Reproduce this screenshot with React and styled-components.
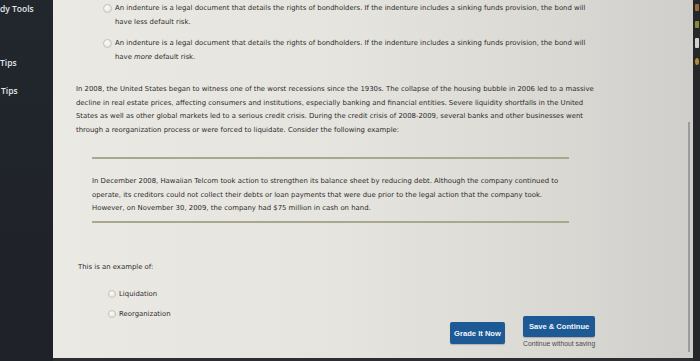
import React from 'react';
import styled, { createGlobalStyle } from 'styled-components';

const Global = createGlobalStyle`
  html, body {
    margin: 0;
    padding: 0;
    background: #1c1f24;
  }
  * {
    box-sizing: border-box;
  }
`;

const Page = styled.div`
  display: flex;
  width: 700px;
  height: 361px;
  overflow: hidden;
  font-family: 'DejaVu Sans', Verdana, sans-serif;
`;

const Sidebar = styled.div`
  width: 53px;
  flex-shrink: 0;
  background: linear-gradient(180deg, #22262d 0%, #1e2228 100%);
  display: flex;
  flex-direction: column;
  padding-top: 3px;
`;

const SideItem = styled.div`
  color: #e4e6ea;
  font-family: 'Open Sans', 'DejaVu Sans', sans-serif;
  font-weight: 600;
  font-size: 8.5px;
  line-height: 11px;
  margin-top: ${p => p.$gap || 0}px;
  margin-left: ${p => p.$indent || 0}px;
  white-space: nowrap;
`;

const Main = styled.div`
  flex: 1;
  display: flex;
  background: linear-gradient(90deg, #ebe9e4 0%, #e6e4df 45%, #d9d8d3 80%, #cfcecb 100%);
  border-bottom: 3px solid #2b2d31;
`;

const Content = styled.div`
  flex: 1;
  display: flex;
  flex-direction: column;
  color: #2e2d2b;
  font-size: 6.9px;
  line-height: 13.5px;
  white-space: nowrap;
`;

const Option = styled.div`
  display: flex;
  align-items: flex-start;
  gap: 3px;
  padding-left: ${p => p.$indent}px;
  margin-top: ${p => p.$top}px;
`;

const Radio = styled.span`
  width: 9px;
  height: 9px;
  border-radius: 50%;
  border: 1px solid #c3c2bc;
  background: radial-gradient(circle at 40% 35%, #fbfbf8, #e2e1dc);
  flex-shrink: 0;
  margin-top: 2px;
`;

const OptionText = styled.div``;

const Paragraph = styled.p`
  margin: ${p => p.$top}px 0 0 ${p => p.$indent}px;
`;

const Rule = styled.div`
  height: 2px;
  background: #aaa78f;
  width: 477px;
  margin: ${p => p.$top}px 0 0 39px;
`;

const Prompt = styled.div`
  margin: 38px 0 0 25px;
`;

const Choice = styled.div`
  display: flex;
  align-items: center;
  gap: 3px;
  padding-left: 55px;
  margin-top: ${p => p.$top}px;
  line-height: 10px;
`;

const SmallRadio = styled(Radio)`
  width: 8px;
  height: 8px;
  margin-top: 0;
`;

const Actions = styled.div`
  display: flex;
  gap: 18px;
  padding-left: 397px;
  margin-top: -3px;
  align-items: flex-start;
`;

const ButtonCol = styled.div`
  display: flex;
  flex-direction: column;
  align-items: center;
  margin-top: ${p => p.$top || 0}px;
`;

const Button = styled.button`
  border: none;
  border-radius: 2px;
  background: #1d5a95;
  color: #f2f5fa;
  font-family: 'Liberation Sans', Arial, sans-serif;
  font-weight: 700;
  font-size: 7.6px;
  height: ${p => p.$h}px;
  width: ${p => p.$w}px;
  padding: 0;
  box-shadow: 0 1px 1px rgba(0, 0, 0, 0.2);
`;

const Link = styled.div`
  font-family: 'Liberation Sans', Arial, sans-serif;
  font-size: 6.8px;
  line-height: 9px;
  color: #4c4c4c;
  margin-top: 2px;
`;

const Scroll = styled.div`
  width: 8px;
  display: flex;
  justify-content: center;
  padding-top: 122px;
  padding-bottom: 6px;
`;

const Thumb = styled.div`
  width: 2px;
  background: #9c9c9a;
  height: 100%;
`;

const Rail = styled.div`
  width: 7px;
  flex-shrink: 0;
  background: #25272b;
  display: flex;
  flex-direction: column;
  align-items: center;
  gap: 10px;
  padding-top: 4px;
`;

const RailIcon = styled.div`
  width: 4px;
  height: ${p => p.$h || 7}px;
  background: ${p => p.$c};
  border-radius: ${p => (p.$round ? '50%' : '1px')};
`;

export default function App() {
  return (
    <>
      <Global />
      <Page>
        <Sidebar>
          <SideItem>dy Tools</SideItem>
          <SideItem $gap={43}>Tips</SideItem>
          <SideItem $gap={17} $indent={1}>Tips</SideItem>
        </Sidebar>
        <Main>
          <Content>
            <Option $indent={50} $top={2}>
              <Radio />
              <OptionText>
                An indenture is a legal document that details the rights of bondholders. If the indenture includes a sinking funds provision, the bond will
                <br />
                have less default risk.
              </OptionText>
            </Option>
            <Option $indent={50} $top={8}>
              <Radio />
              <OptionText>
                An indenture is a legal document that details the rights of bondholders. If the indenture includes a sinking funds provision, the bond will
                <br />
                have <i>more</i> default risk.
              </OptionText>
            </Option>
            <Paragraph $top={19} $indent={23}>
              In 2008, the United States began to witness one of the worst recessions since the 1930s. The collapse of the housing bubble in 2006 led to a massive
              <br />
              decline in real estate prices, affecting consumers and institutions, especially banking and financial entities. Severe liquidity shortfalls in the United
              <br />
              States as well as other global markets led to a serious credit crisis. During the credit crisis of 2008-2009, several banks and other businesses went
              <br />
              through a reorganization process or were forced to liquidate. Consider the following example:
            </Paragraph>
            <Rule $top={20} />
            <Paragraph $top={16} $indent={39}>
              In December 2008, Hawaiian Telcom took action to strengthen its balance sheet by reducing debt. Although the company continued to
              <br />
              operate, its creditors could not collect their debts or loan payments that were due prior to the legal action that the company took.
              <br />
              However, on November 30, 2009, the company had $75 million in cash on hand.
            </Paragraph>
            <Rule $top={5} />
            <Prompt>This is an example of:</Prompt>
            <Choice $top={15}>
              <SmallRadio />
              Liquidation
            </Choice>
            <Choice $top={10}>
              <SmallRadio />
              Reorganization
            </Choice>
            <Actions>
              <ButtonCol $top={6}>
                <Button $w={55} $h={22}>Grade It Now</Button>
              </ButtonCol>
              <ButtonCol>
                <Button $w={72} $h={21}>Save &amp; Continue</Button>
                <Link>Continue without saving</Link>
              </ButtonCol>
            </Actions>
          </Content>
          <Scroll>
            <Thumb />
          </Scroll>
        </Main>
        <Rail>
          <RailIcon $c="#9a6a3a" />
          <RailIcon $c="#8b8a3c" />
          <RailIcon $c="#cfcfcf" $h={10} />
          <RailIcon $c="#b08a30" $round />
        </Rail>
      </Page>
    </>
  );
}
